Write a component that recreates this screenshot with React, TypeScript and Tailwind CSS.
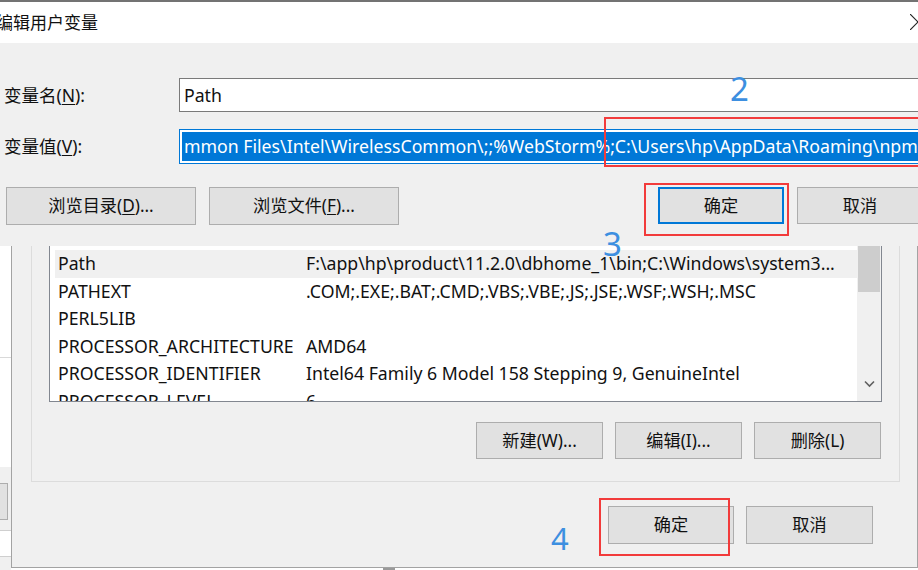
import React from "react";

const FONT = "font-['Noto_Sans','Noto_Sans_CJK_SC',sans-serif]";

function Btn({
  children,
  className = "",
}: {
  children: React.ReactNode;
  className?: string;
}) {
  return (
    <div
      className={`shrink-0 flex items-center justify-center bg-[#e1e1e1] border border-[#adadad] text-[17.2px] text-[#111] leading-none ${className}`}
    >
      {children}
    </div>
  );
}

const rows: [string, string][] = [
  ["Path", "F:\\app\\hp\\product\\11.2.0\\dbhome_1\\bin;C:\\Windows\\system3..."],
  ["PATHEXT", ".COM;.EXE;.BAT;.CMD;.VBS;.VBE;.JS;.JSE;.WSF;.WSH;.MSC"],
  ["PERL5LIB", ""],
  ["PROCESSOR_ARCHITECTURE", "AMD64"],
  ["PROCESSOR_IDENTIFIER", "Intel64 Family 6 Model 158 Stepping 9, GenuineIntel"],
  ["PROCESSOR_LEVEL", "6"],
];

export default function App() {
  return (
    <div className={`relative w-[918px] h-[570px] overflow-hidden bg-white ${FONT}`}>
      {/* desktop fragments at left edge */}
      <div className="absolute left-0 top-[357px] w-[11px] h-px bg-[#d9d9d9]" />
      <div className="absolute left-0 top-[467px] w-[11px] h-[64px] bg-[#f0f0f0] border-b border-[#cfcfcf]" />
      <div className="absolute left-0 top-[483px] w-[8px] h-[37px] bg-[#e1e1e1] border-r border-y border-[#adadad]" />
      <div className="absolute left-0 top-[556px] w-[11px] h-[14px] bg-[#f0f0f0] border-t border-[#cfcfcf]" />
      <div className="absolute left-[383px] top-[567px] w-[12px] h-[3px] bg-[#9a9a9a]" />

      {/* background window: environment variables */}
      <div className="absolute left-[11px] top-0 w-[907px] h-[568px] bg-[#f0f0f0] border-l border-r border-b border-[#a3a3a3] flex flex-col">
        <div className="ml-[19px] mr-[17px] h-[482px] border-l border-r border-b border-[#dcdcdc] flex flex-col justify-end pl-[17px] pr-[17px] pb-[22px]">
          <div className="h-[158px] border border-[#828790] bg-white flex">
            <div className="flex-1 pl-[5px] pt-[5px] overflow-hidden">
              {rows.map(([k, v], i) => (
                <div
                  key={k}
                  className={`h-[27.5px] flex items-center pl-[3px] text-[17.7px] text-[#111] whitespace-nowrap ${
                    i === 0 ? "bg-[#f0f0f0]" : ""
                  }`}
                >
                  <span className="w-[248px] shrink-0">{k}</span>
                  <span>{v}</span>
                </div>
              ))}
            </div>
            <div className="w-[24px] bg-[#f0f0f0] flex flex-col items-center">
              <div className="w-[22px] h-[47px] bg-[#cdcdcd]" />
              <div className="flex-1" />
              <svg width="11" height="8" viewBox="0 0 11 8" className="mb-[13px]">
                <path d="M1 1.5 L5.5 6 L10 1.5" fill="none" stroke="#606060" strokeWidth="1.6" />
              </svg>
            </div>
          </div>
          <div className="mt-[20px] flex justify-end gap-[12px]">
            <Btn className="w-[127px] h-[37px]">新建(W)...</Btn>
            <Btn className="w-[127px] h-[37px]">编辑(I)...</Btn>
            <Btn className="w-[127px] h-[37px] mr-[1px]">删除(L)</Btn>
          </div>
        </div>
        <div className="mt-[24px] flex justify-end gap-[12px] pr-[44px]">
          <Btn className="w-[126px] h-[38px]">确定</Btn>
          <Btn className="w-[127px] h-[38px]">取消</Btn>
        </div>
      </div>

      {/* foreground window: edit user variable */}
      <div className="absolute left-0 top-0 w-[918px] flex flex-col">
        <div className="h-[2px] bg-[#737373]" />
        <div className="h-[41px] bg-white flex items-center">
          <span className="ml-[-4px] text-[17px] text-[#111] leading-none">编辑用户变量</span>
        </div>
        <div className="h-[203px] bg-[#f0f0f0] flex flex-col pl-[4px] pt-[35px] overflow-hidden">
          <div className="flex items-center h-[34px]">
            <span className="w-[175px] shrink-0 text-[17.5px] text-[#111]">
              变量名(<span className="underline underline-offset-2">N</span>):
            </span>
            <div className="shrink-0 w-[760px] h-[34px] bg-white border border-[#7a7a7a] flex items-center pl-[4px] text-[17.7px] text-[#111]">
              Path
            </div>
          </div>
          <div className="flex items-center h-[35px] mt-[17px]">
            <span className="w-[175px] shrink-0 text-[17.5px] text-[#111]">
              变量值(<span className="underline underline-offset-2">V</span>):
            </span>
            <div className="shrink-0 w-[760px] h-[35px] bg-white border border-[#0078d7] flex items-center pl-[2px] overflow-hidden">
              <span className="h-[29px] bg-[#0078d7] text-white text-[17.7px] leading-[29px] pl-[2px] whitespace-nowrap w-[760px]">
                mmon Files\Intel\WirelessCommon\;;%WebStorm%;C:\Users\hp\AppData\Roaming\npm
              </span>
            </div>
          </div>
          <div className="flex mt-[23px] ml-[2px]">
            <Btn className="w-[190px] h-[38px]">
              浏览目录(<span className="underline underline-offset-2">D</span>)...
            </Btn>
            <Btn className="w-[190px] h-[38px] ml-[13px]">
              浏览文件(<span className="underline underline-offset-2">F</span>)...
            </Btn>
            <Btn className="w-[126px] h-[37px] ml-[259px] !border-2 !border-[#0078d7]">确定</Btn>
            <Btn className="w-[126px] h-[37px] ml-[13px]">取消</Btn>
          </div>
        </div>
      </div>

      {/* close glyph */}
      <svg className="absolute left-[910px] top-[14px]" width="16" height="16" viewBox="0 0 16 16">
        <path d="M0 0 L16 16 M16 0 L0 16" stroke="#222" strokeWidth="1.2" />
      </svg>

      {/* annotations */}
      <div className="absolute left-[604px] top-[117px] w-[340px] h-[50px] border-2 border-[#f23b3b]" />
      <div className="absolute left-[644px] top-[183px] w-[145px] h-[53px] border-2 border-[#f23b3b]" />
      <div className="absolute left-[599px] top-[498px] w-[131px] h-[58px] border-2 border-[#f23b3b]" />
      <span className="absolute left-[730px] top-[72px] text-[33px] leading-none text-[#3d8fe0]">2</span>
      <span className="absolute left-[603px] top-[227px] text-[33px] leading-none text-[#3d8fe0]">3</span>
      <span className="absolute left-[551px] top-[523px] text-[31px] leading-none text-[#3d8fe0]">4</span>
    </div>
  );
}
